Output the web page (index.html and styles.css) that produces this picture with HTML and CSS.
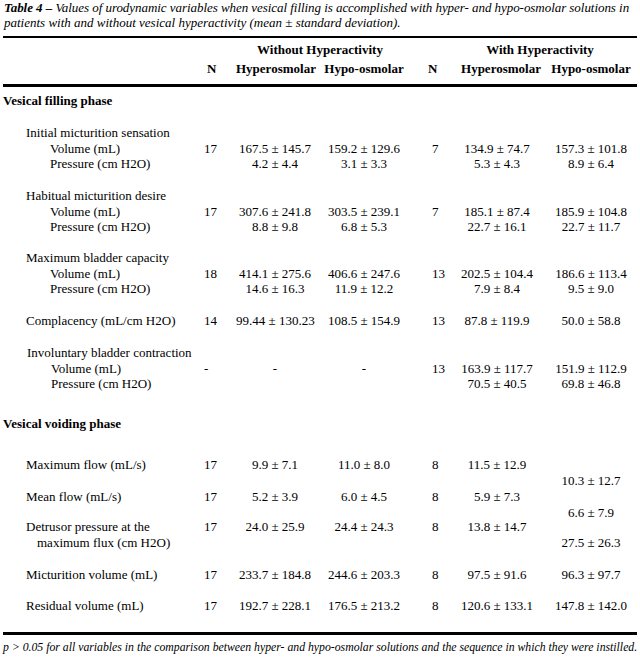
FILE: index.html
```html
<!DOCTYPE html>
<html>
<head>
<meta charset="utf-8">
<link rel="stylesheet" href="styles.css">
</head>
<body>
<div class="page">
  <div class="caption">
    <div class="cap-line cap-first"><b>Table 4 –</b> Values of urodynamic variables when vesical filling is accomplished with hyper- and hypo-osmolar solutions in</div>
    <div class="cap-line">patients with and without vesical hyperactivity (mean ± standard deviation).</div>
  </div>
  <div class="rule rule-top"></div>

  <div class="head">
    <div class="row">
      <div></div><div></div>
      <div class="span2 grp1">Without Hyperactivity</div>
      <div></div>
      <div class="span2 grp2">With Hyperactivity</div>
    </div>
    <div class="row">
      <div></div>
      <div class="hn1">N</div>
      <div class="c">Hyperosmolar</div>
      <div class="c">Hypo-osmolar</div>
      <div class="hn2">N</div>
      <div class="c">Hyperosmolar</div>
      <div class="c">Hypo-osmolar</div>
    </div>
  </div>
  <div class="rule rule-mid"></div>

  <div class="section">Vesical filling phase</div>

  <div class="row grp g63">
    <div class="lab">Initial micturition sensation<br><span class="ind">Volume (mL)</span><br><span class="ind">Pressure (cm H2O)</span></div>
    <div class="n1"><br>17</div>
    <div class="v1"><br>167.5 ± 145.7<br>4.2 ± 4.4</div>
    <div class="v2"><br>159.2 ± 129.6<br>3.1 ± 3.3</div>
    <div class="n2"><br>7</div>
    <div class="v3"><br>134.9 ± 74.7<br>5.3 ± 4.3</div>
    <div class="v4"><br>157.3 ± 101.8<br>8.9 ± 6.4</div>
  </div>

  <div class="row grp g62">
    <div class="lab">Habitual micturition desire<br><span class="ind">Volume (mL)</span><br><span class="ind">Pressure (cm H2O)</span></div>
    <div class="n1"><br>17</div>
    <div class="v1"><br>307.6 ± 241.8<br>8.8 ± 9.8</div>
    <div class="v2"><br>303.5 ± 239.1<br>6.8 ± 5.3</div>
    <div class="n2"><br>7</div>
    <div class="v3"><br>185.1 ± 87.4<br>22.7 ± 16.1</div>
    <div class="v4"><br>185.9 ± 104.8<br>22.7 ± 11.7</div>
  </div>

  <div class="row grp g63">
    <div class="lab">Maximum bladder capacity<br><span class="ind">Volume (mL)</span><br><span class="ind">Pressure (cm H2O)</span></div>
    <div class="n1"><br>18</div>
    <div class="v1"><br>414.1 ± 275.6<br>14.6 ± 16.3</div>
    <div class="v2"><br>406.6 ± 247.6<br>11.9 ± 12.2</div>
    <div class="n2"><br>13</div>
    <div class="v3"><br>202.5 ± 104.4<br>7.9 ± 8.4</div>
    <div class="v4"><br>186.6 ± 113.4<br>9.5 ± 9.0</div>
  </div>

  <div class="row grp g32">
    <div class="lab">Complacency (mL/cm H2O)</div>
    <div class="n1">14</div>
    <div class="v1">99.44 ± 130.23</div>
    <div class="v2">108.5 ± 154.9</div>
    <div class="n2">13</div>
    <div class="v3">87.8 ± 119.9</div>
    <div class="v4">50.0 ± 58.8</div>
  </div>

  <div class="row grp g71">
    <div class="lab lab-inv">Involuntary bladder contraction<br><span class="ind">Volume (mL)</span><br><span class="ind">Pressure (cm H2O)</span></div>
    <div class="n1"><br>-</div>
    <div class="v1"><br>-</div>
    <div class="v2"><br>-</div>
    <div class="n2"><br>13</div>
    <div class="v3"><br>163.9 ± 117.7<br>70.5 ± 40.5</div>
    <div class="v4"><br>151.9 ± 112.9<br>69.8 ± 46.8</div>
  </div>

  <div class="section g41">Vesical voiding phase</div>

  <div class="row grp g32">
    <div class="lab">Maximum flow (mL/s)</div>
    <div class="n1">17</div>
    <div class="v1">9.9 ± 7.1</div>
    <div class="v2">11.0 ± 8.0</div>
    <div class="n2">8</div>
    <div class="v3">11.5 ± 12.9</div>
    <div class="v4"><br>10.3 ± 12.7</div>
  </div>

  <div class="row grp g30">
    <div class="lab">Mean flow (mL/s)</div>
    <div class="n1">17</div>
    <div class="v1">5.2 ± 3.9</div>
    <div class="v2">6.0 ± 4.5</div>
    <div class="n2">8</div>
    <div class="v3">5.9 ± 7.3</div>
    <div class="v4"><br>6.6 ± 7.9</div>
  </div>

  <div class="row grp g48">
    <div class="lab">Detrusor pressure at the<br><span class="ind2">maximum flux (cm H2O)</span></div>
    <div class="n1">17</div>
    <div class="v1">24.0 ± 25.9</div>
    <div class="v2">24.4 ± 24.3</div>
    <div class="n2">8</div>
    <div class="v3">13.8 ± 14.7</div>
    <div class="v4"><br>27.5 ± 26.3</div>
  </div>

  <div class="row grp g31">
    <div class="lab">Micturition volume (mL)</div>
    <div class="n1">17</div>
    <div class="v1">233.7 ± 184.8</div>
    <div class="v2">244.6 ± 203.3</div>
    <div class="n2">8</div>
    <div class="v3">97.5 ± 91.6</div>
    <div class="v4">96.3 ± 97.7</div>
  </div>

  <div class="row grp g34">
    <div class="lab">Residual volume (mL)</div>
    <div class="n1">17</div>
    <div class="v1">192.7 ± 228.1</div>
    <div class="v2">176.5 ± 213.2</div>
    <div class="n2">8</div>
    <div class="v3">120.6 ± 133.1</div>
    <div class="v4">147.8 ± 142.0</div>
  </div>

  <div class="rule rule-bot"></div>
  <div class="foot"><i>p</i> &gt; 0.05 for all variables in the comparison between hyper- and hypo-osmolar solutions and the sequence in which they were instilled.</div>
</div>
</body>
</html>
```

FILE: styles.css
```css
html, body {
  margin: 0;
  padding: 0;
  background: #ffffff;
}
body {
  width: 640px;
  height: 657px;
  overflow: hidden;
  font-family: "Liberation Serif", "Times New Roman", serif;
  font-size: 13px;
  color: #000;
}
.page {
  width: 640px;
  overflow: hidden;
}
.caption {
  font-style: italic;
  line-height: 15px;
  padding-left: 4px;
  white-space: nowrap;
}
.cap-first {
  letter-spacing: -0.05px;
}
.cap-line b {
  font-weight: bold;
}
.rule {
  margin-left: 3px;
  margin-right: 3px;
  background: #000;
}
.rule-top {
  margin-top: 6px;
  height: 2px;
}
.rule-mid {
  margin-top: 7px;
  height: 3px;
}
.rule-bot {
  height: 3px;
}
.head {
  margin-top: 4px;
  font-weight: bold;
  line-height: 16px;
  display: flex;
  flex-direction: column;
  gap: 3px;
}
.row {
  display: grid;
  grid-template-columns: 197px 36px 78px 100px 42px 90px 90px;
  padding-left: 3px;
  white-space: nowrap;
}
.span2 {
  grid-column: span 2;
  text-align: center;
}
.grp1 {
  padding-right: 10px;
}
.grp2 {
  padding-right: 12px;
}
.c {
  text-align: center;
}
.hn1 {
  padding-left: 7px;
}
.hn2 {
  padding-left: 14px;
}
.section {
  margin-top: 6px;
  padding-left: 3px;
  font-weight: bold;
  line-height: 16px;
  height: 16px;
  margin-bottom: 16px;
}
.grp {
  line-height: 15.5px;
}
.lab {
  padding-left: 23px;
}
.lab-inv {
  padding-left: 24px;
}
.ind {
  padding-left: 24px;
}
.ind2 {
  padding-left: 11px;
}
.n1 {
  padding-left: 4px;
}
.n2 {
  padding-left: 18px;
}
.v1, .v2, .v4 {
  text-align: center;
}
.v3 {
  text-align: center;
  padding-right: 8px;
}
.g63 { height: 63px; }
.g62 { height: 62px; }
.g32 { height: 32px; }
.g30 { height: 30px; }
.g31 { height: 31px; }
.g34 { height: 34px; }
.g48 { height: 48px; }
.g71 { height: 71px; }
.section.g41 {
  margin-top: 0;
  margin-bottom: 25px;
}
.foot {
  margin-top: 5px;
  padding-left: 3px;
  font-style: italic;
  font-size: 11.75px;
  line-height: 15px;
  white-space: nowrap;
}
```
